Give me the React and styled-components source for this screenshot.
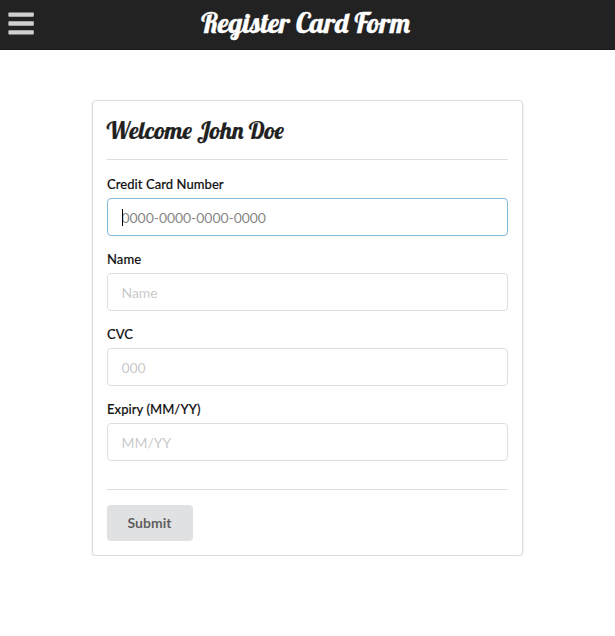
import React from "react";
import styled, { createGlobalStyle } from "styled-components";

const GlobalStyle = createGlobalStyle`
  * { box-sizing: border-box; }
  body {
    margin: 0;
    background: #fff;
    font-family: Lato, "Liberation Sans", sans-serif;
    font-size: 14px;
    color: rgba(0, 0, 0, .87);
  }
`;

const Header = styled.header`
  display: grid;
  grid-template-columns: 42px 1fr 42px;
  align-items: center;
  height: 50px;
  background: #222;
  border-bottom: 1px solid #1b1c1d;
`;
const MenuButton = styled.button`
  display: flex;
  margin: -2px 0 0 8px;
  padding: 0;
  border: 0;
  background: none;
`;
const Title = styled.h1`
  margin: 0 0 3px -4px;
  color: #fff;
  font: 400 28px/36px Lobster, "Liberation Serif", cursive;
  -webkit-text-stroke: 0.4px currentColor;
  text-align: center;
  white-space: nowrap;
`;
const Heading = styled.h2`
  margin: 0 0 0 -0.5px;
  height: 44px;
  font: 400 24px/31px Lobster, "Liberation Serif", cursive;
  -webkit-text-stroke: 0.2px currentColor;
  color: #212121;
  white-space: nowrap;
`;
const Card = styled.form`
  width: 431px;
  height: 456px;
  margin: 50px 0 0 92px;
  padding: 14px;
  border: 1px solid #dcddde;
  border-radius: 4px;
  box-shadow: 0 1px 2px 0 rgba(34, 36, 38, .15);
`;
const Divider = styled.hr`
  margin: 0 0 15px;
  border: 0;
  border-top: 1px solid #dededf;
`;
const Fields = styled.div`
  display: flex;
  flex-direction: column;
  gap: 14px;
  margin-bottom: 28px;
`;
const FieldBox = styled.label`
  display: block;
`;
const Label = styled.span`
  display: block;
  height: 23px;
  line-height: 18px;
  font-size: 13px;
  font-weight: 500;
  letter-spacing: 0.06px;
  -webkit-text-stroke: 0.15px currentColor;
  color: #111;
`;
const Control = styled.span`
  display: block;
  position: relative;
`;
const Input = styled.input`
  display: block;
  width: 100%;
  height: 38px;
  padding: 1px 13.5px 0;
  border: 1px solid ${(p) => (p.$active ? "#85b7d9" : "#dededf")};
  border-radius: 4px;
  outline: 0;
  background: #fff;
  font: 14px Lato, "Liberation Sans", sans-serif;
  letter-spacing: -0.06px;
  &::placeholder {
    opacity: 1;
    color: ${(p) => (p.$active ? "rgba(115,115,115,.87)" : "rgba(191,191,191,.87)")};
  }
`;
const Caret = styled.span`
  position: absolute;
  left: 15px;
  top: 11px;
  width: 1px;
  height: 17px;
  background: #000;
`;
const Submit = styled.button`
  display: block;
  width: 86px;
  height: 36px;
  padding: 0 1px 2px 0;
  border: 0;
  border-radius: 4px;
  background: #e0e1e2;
  color: rgba(0, 0, 0, .6);
  font: 700 14px Lato, "Liberation Sans", sans-serif;
`;

function Field({ label, placeholder, active }) {
  return (
    <FieldBox>
      <Label>{label}</Label>
      <Control>
        <Input placeholder={placeholder} $active={active} />
        {active && <Caret />}
      </Control>
    </FieldBox>
  );
}

export default function App() {
  return (
    <>
      <GlobalStyle />
      <Header>
        <MenuButton type="button" aria-label="Menu">
          <svg width="26" height="23" viewBox="0 0 26 23" fill="#d0d0d0">
            <rect x="0.4" y="0.4" width="25.4" height="4.4" rx="0.8" />
            <rect x="0.4" y="9.3" width="25.4" height="4.4" rx="0.8" />
            <rect x="0.4" y="18.2" width="25.4" height="4.4" rx="0.8" />
          </svg>
        </MenuButton>
        <Title>Register Card Form</Title>
      </Header>
      <Card>
        <Heading>Welcome John Doe</Heading>
        <Divider />
        <Fields>
          <Field label="Credit Card Number" placeholder="0000-0000-0000-0000" active />
          <Field label="Name" placeholder="Name" />
          <Field label="CVC" placeholder="000" />
          <Field label="Expiry (MM/YY)" placeholder="MM/YY" />
        </Fields>
        <Divider />
        <Submit type="button">Submit</Submit>
      </Card>
    </>
  );
}
